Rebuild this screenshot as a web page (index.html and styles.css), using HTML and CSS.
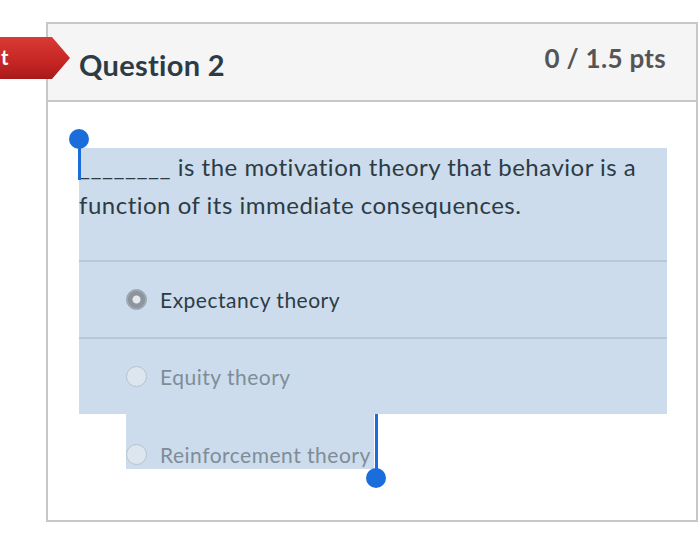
FILE: index.html
```html
<!DOCTYPE html>
<html>
<head>
<meta charset="utf-8">
<link rel="stylesheet" href="styles.css">
</head>
<body>
<div class="tag"><span class="tag-text">t</span></div>
<div class="card">
  <div class="card-header">
    <h2 class="title">Question 2</h2>
    <div class="pts">0 / 1.5 pts</div>
  </div>
  <div class="card-body">
    <div class="selected">
      <span class="handle handle-start"><span class="handle-dot"></span><span class="handle-stem"></span></span>
      <p class="question">________ is the motivation theory that behavior is a function of its immediate consequences.</p>
      <div class="answer">
        <span class="radio radio-checked"></span>
        <span class="answer-text answer-strong">Expectancy theory</span>
      </div>
      <div class="answer">
        <span class="radio"></span>
        <span class="answer-text">Equity theory</span>
      </div>
    </div>
    <div class="answer answer-last">
      <div class="sel-tail">
        <span class="radio"></span>
        <span class="answer-text">Reinforcement theory</span>
        <span class="handle handle-end"><span class="handle-stem"></span><span class="handle-dot"></span></span>
      </div>
    </div>
  </div>
</div>
</body>
</html>
```

FILE: styles.css
```css
* { box-sizing: border-box; }
html, body { margin: 0; padding: 0; background: #fff; }
body {
  font-family: Lato, "Open Sans", "Liberation Sans", sans-serif;
  color: #2d3b45;
  position: relative;
  width: 700px;
  height: 533px;
  overflow: hidden;
}
.card {
  margin: 22px 0 0 46px;
  width: 652px;
  height: 500px;
  border: 2px solid #c7c7c7;
  background: #fff;
}
.card-header {
  height: 78px;
  background: #f5f5f5;
  border-bottom: 2px solid #c8c8c8;
  display: flex;
  justify-content: space-between;
  align-items: flex-start;
  padding: 0 30px 0 31px;
}
.title {
  margin: 24px 0 0 0;
  font-size: 29px;
  font-weight: 700;
  line-height: 34px;
  letter-spacing: 0.3px;
  color: #2d3b45;
}
.pts {
  margin-top: 18px;
  font-size: 26px;
  font-weight: 700;
  line-height: 32px;
  letter-spacing: 0.3px;
  color: #555;
}
.card-body {
  padding: 46px 29px 0 31px;
}
.selected {
  position: relative;
  background: #ccdcec;
}
.question {
  margin: 0;
  font-size: 24px;
  line-height: 38px;
  letter-spacing: 0.5px;
  padding-bottom: 36px;
  color: #2d3b45;
}
.answer {
  height: 77px;
  border-top: 2px solid #b8c8d8;
  display: flex;
  align-items: center;
  padding-left: 47px;
}
.answer-last {
  border-top: none;
  align-items: flex-start;
  height: 78px;
}
.sel-tail {
  position: relative;
  display: flex;
  align-items: center;
  background: #ccdcec;
  height: 55px;
  padding-top: 26px;
  padding-right: 3px;
}
.radio {
  width: 21px;
  height: 21px;
  border-radius: 50%;
  border: 1px solid #b7c2cc;
  background: #dde6ef;
  margin-right: 13px;
  flex: none;
}
.radio-checked {
  background: radial-gradient(circle, #e3e9ee 0 3.5px, #8c959d 4.5px 8px, #a1a9b0 9px);
  border-color: #9aa3ab;
}
.answer-text {
  font-size: 21px;
  line-height: 26px;
  letter-spacing: 0.5px;
  color: #7f8c98;
}
.answer-strong { color: #2d3b45; }
.handle {
  position: absolute;
  display: block;
}
.handle-dot {
  position: absolute;
  width: 20px;
  height: 20px;
  border-radius: 50%;
  background: #1b6ddc;
}
.handle-stem {
  position: absolute;
  width: 3px;
  background: #1b6ddc;
}
.handle-start { left: 0; top: 0; }
.handle-start .handle-dot { left: -10px; top: -19px; }
.handle-start .handle-stem { left: -1px; top: -9px; height: 41px; }
.handle-end { right: -2px; top: 0; }
.handle-end .handle-stem { left: -1px; top: 0; height: 56px; }
.handle-end .handle-dot { left: -10px; top: 54px; }
.tag {
  position: absolute;
  left: -4px;
  top: 37px;
  width: 74px;
  height: 42px;
  background: linear-gradient(#d93a35, #c52624 60%, #a81a1a);
  clip-path: polygon(0 0, 56px 0, 74px 50%, 56px 100%, 0 100%);
  z-index: 2;
}
.tag-text {
  position: absolute;
  left: 5px;
  top: 8px;
  color: #fff;
  font-weight: 700;
  font-size: 20px;
  line-height: 24px;
}
```
